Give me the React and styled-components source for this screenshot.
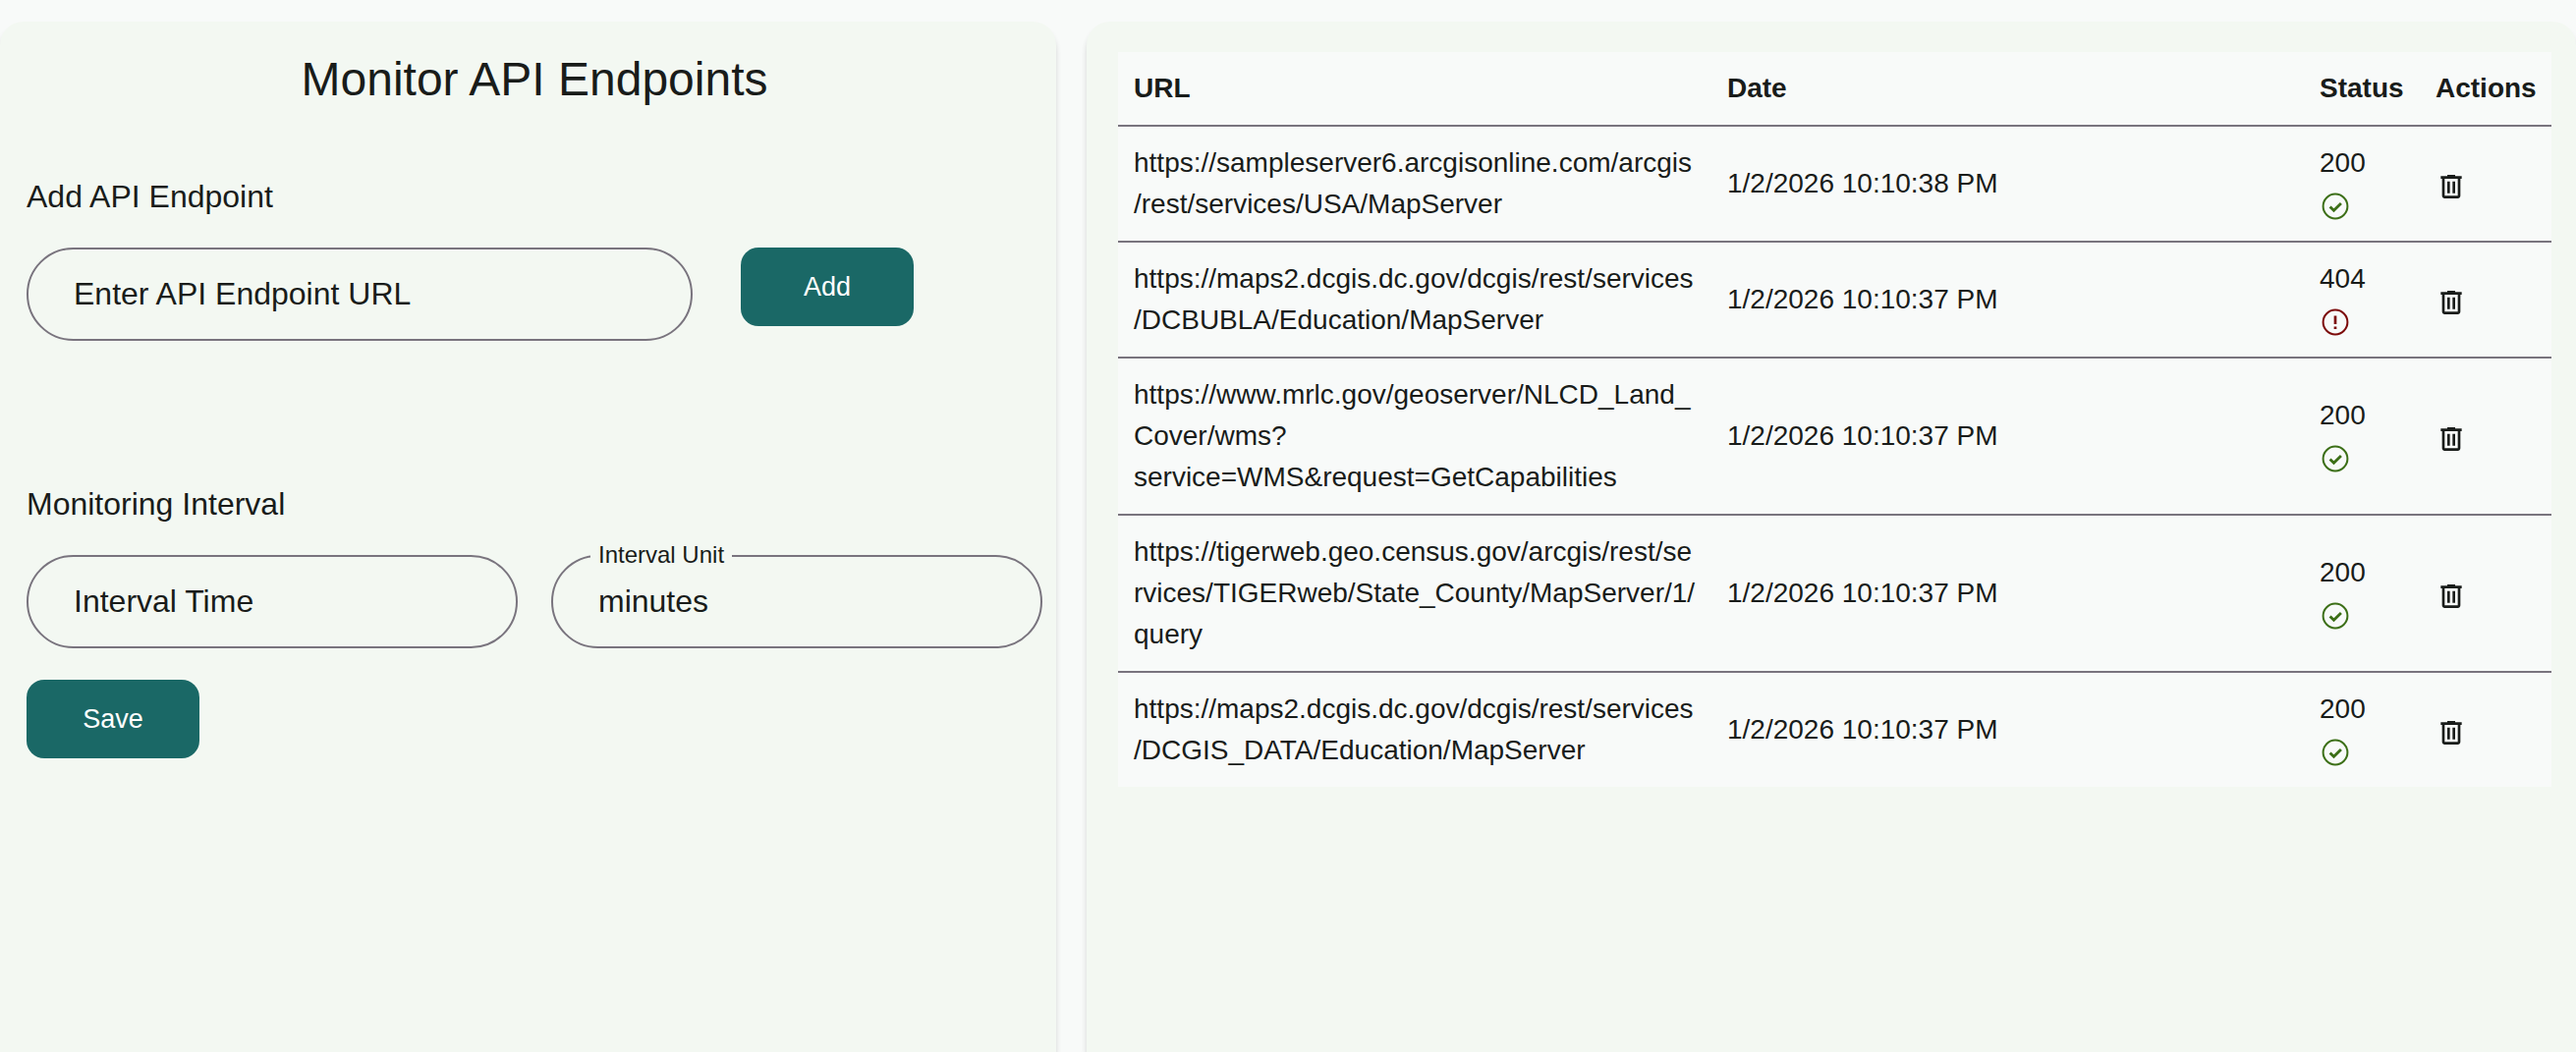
import React from "react";
import styled, { createGlobalStyle } from "styled-components";

const Global = createGlobalStyle`
  html, body { margin: 0; height: 100%; overflow: hidden; background: #f8faf9; }
  body { font-family: "Liberation Sans", Arial, sans-serif; color: #191c1a; }
  * { box-sizing: border-box; }
`;

const Page = styled.main`
  display: grid;
  grid-template-columns: 1075px 1516px;
  column-gap: 31px;
  height: 1071px;
  padding-top: 22px;
`;

const Panel = styled.section`
  background: #f3f8f2;
  border-radius: 24px 24px 0 0;
  box-shadow: 0 6px 6px -1px rgba(0, 0, 0, 0.2);
`;

const FormPanel = styled(Panel)`
  display: flex;
  flex-direction: column;
  align-items: flex-start;
  padding: 27px 14px 0 27px;
`;

const ListPanel = styled(Panel)`
  padding: 31px 25px 0 32px;
`;

const Title = styled.h1`
  align-self: stretch;
  margin: 0 0 66px;
  font-size: 48px;
  font-weight: 400;
  line-height: 64px;
  text-align: center;
`;

const SectionLabel = styled.h2`
  margin: 0 0 31px;
  font-size: 32px;
  font-weight: 400;
  line-height: 42px;
`;

const AddRow = styled.div`
  display: flex;
  align-items: flex-start;
  gap: 49px;
  margin-bottom: 145px;
`;

const IntervalRow = styled.div`
  display: flex;
  gap: 34px;
  margin-bottom: 32px;
`;

const Field = styled.div`
  position: relative;
  display: flex;
  align-items: center;
  width: ${(p) => p.$width}px;
  height: 95px;
  padding: 0 46px;
  border: 2px solid #79747e;
  border-radius: 48px;
  font-size: 32px;
`;

const TextInput = styled.input`
  width: 100%;
  padding: 0;
  border: 0;
  outline: 0;
  background: transparent;
  color: #191c1a;
  font: inherit;
  &::placeholder { color: #191c1a; opacity: 1; }
`;

const FloatLabel = styled.span`
  position: absolute;
  left: 38px;
  top: -14px;
  padding: 0 8px;
  background: #f3f8f2;
  font-size: 24px;
  line-height: 24px;
`;

const Button = styled.button`
  width: 176px;
  height: 80px;
  border: 0;
  border-radius: 18px;
  background: #1a6866;
  color: #fff;
  font: 27px/32px "Liberation Sans", Arial, sans-serif;
`;

const Table = styled.table`
  width: 1459px;
  table-layout: fixed;
  border-collapse: collapse;
  background: #f8faf9;
  font-size: 28px;
  line-height: 42px;
`;

const Head = styled.th`
  height: 75px;
  padding: 0 16px;
  border-bottom: 2px solid #79747e;
  font-weight: 700;
  text-align: left;
`;

const Row = styled.tr`
  & + & td { border-top: 2px solid #79747e; }
`;

const Cell = styled.td`
  padding: 16px;
  overflow-wrap: anywhere;
  vertical-align: middle;
`;

const StatusIcon = styled.svg`
  display: block;
  width: 32px;
  height: 32px;
  margin: 7px 0 3px;
  color: ${(p) => p.$color};
`;

const IconButton = styled.button`
  display: block;
  width: 32px;
  height: 32px;
  margin-top: 5px;
  padding: 0;
  border: 0;
  background: none;
  color: #191c1a;
`;

const TrashSvg = styled.svg`
  display: block;
  width: 32px;
  height: 32px;
  fill: currentColor;
`;

const Ok = () => (
  <StatusIcon $color="#3c6f17" viewBox="0 0 32 32" fill="none" stroke="currentColor" strokeWidth="2">
    <circle cx="16" cy="16" r="12.4" />
    <path d="M10.6 16.4l3.9 3.9 7.4-7.4" strokeWidth="2.8" />
  </StatusIcon>
);

const Err = () => (
  <StatusIcon $color="#7c0a0a" viewBox="0 0 32 32" fill="none" stroke="currentColor" strokeWidth="2">
    <circle cx="16" cy="16" r="12.4" />
    <path d="M16 9.5v8.5M16 20.4v2.6" strokeWidth="2.7" />
  </StatusIcon>
);

const Trash = () => (
  <IconButton aria-label="Delete">
    <TrashSvg viewBox="0 -960 960 960">
      <path d="M280-120q-33 0-56.5-23.5T200-200v-520h-40v-80h200v-40h240v40h200v80h-40v520q0 33-23.5 56.5T680-120H280Zm400-600H280v520h400v-520ZM360-280h80v-360h-80v360Zm160 0h80v-360h-80v360ZM280-720v520-520Z" />
    </TrashSvg>
  </IconButton>
);

const rows = [
  ["https://sampleserver6.arcgisonline.com/arcgis/rest/services/USA/MapServer", "1/2/2026 10:10:38 PM", 200],
  ["https://maps2.dcgis.dc.gov/dcgis/rest/services/DCBUBLA/Education/MapServer", "1/2/2026 10:10:37 PM", 404],
  ["https://www.mrlc.gov/geoserver/NLCD_Land_Cover/wms?service=WMS&request=GetCapabilities", "1/2/2026 10:10:37 PM", 200],
  ["https://tigerweb.geo.census.gov/arcgis/rest/services/TIGERweb/State_County/MapServer/1/query", "1/2/2026 10:10:37 PM", 200],
  ["https://maps2.dcgis.dc.gov/dcgis/rest/services/DCGIS_DATA/Education/MapServer", "1/2/2026 10:10:37 PM", 200],
];

export default function App() {
  return (
    <Page>
      <Global />
      <FormPanel>
        <Title>Monitor API Endpoints</Title>
        <SectionLabel>Add API Endpoint</SectionLabel>
        <AddRow>
          <Field $width={678}>
            <TextInput placeholder="Enter API Endpoint URL" />
          </Field>
          <Button>Add</Button>
        </AddRow>
        <SectionLabel>Monitoring Interval</SectionLabel>
        <IntervalRow>
          <Field $width={500}>
            <TextInput placeholder="Interval Time" />
          </Field>
          <Field $width={500}>
            <FloatLabel>Interval Unit</FloatLabel>
            minutes
          </Field>
        </IntervalRow>
        <Button>Save</Button>
      </FormPanel>
      <ListPanel>
        <Table>
          <colgroup>
            <col style={{ width: 604 }} />
            <col style={{ width: 603 }} />
            <col style={{ width: 118 }} />
            <col style={{ width: 134 }} />
          </colgroup>
          <thead>
            <tr>
              <Head>URL</Head>
              <Head>Date</Head>
              <Head>Status</Head>
              <Head>Actions</Head>
            </tr>
          </thead>
          <tbody>
            {rows.map(([url, date, code]) => (
              <Row key={url}>
                <Cell>{url}</Cell>
                <Cell>{date}</Cell>
                <Cell>
                  {code}
                  {code === 200 ? <Ok /> : <Err />}
                </Cell>
                <Cell>
                  <Trash />
                </Cell>
              </Row>
            ))}
          </tbody>
        </Table>
      </ListPanel>
    </Page>
  );
}
